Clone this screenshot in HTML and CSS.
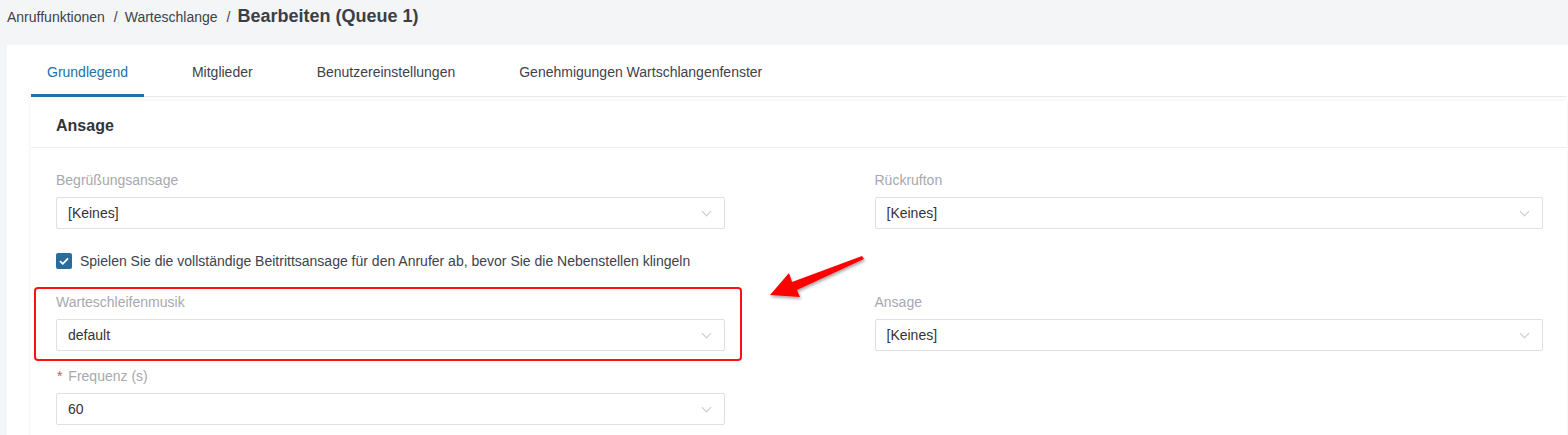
FILE: index.html
```html
<!DOCTYPE html>
<html lang="de">

<head>
  <meta charset="UTF-8" />
  <meta name="viewport" content="width=device-width, initial-scale=1.0" />
  <title>Bearbeiten (Queue 1)</title>
  <link rel="stylesheet" href="styles.css">
</head>

<body>
  <div class="page">
    <div class="breadcrumb">
      <span class="crumb">Anruffunktionen</span>
      <span class="sep">/</span>
      <span class="crumb">Warteschlange</span>
      <span class="sep">/</span>
      <span class="crumb current">Bearbeiten (Queue 1)</span>
    </div>

    <div class="main-card">
      <div class="tabs">
        <div class="tab active">Grundlegend</div>
        <div class="tab">Mitglieder</div>
        <div class="tab">Benutzereinstellungen</div>
        <div class="tab">Genehmigungen Wartschlangenfenster</div>
      </div>

      <div class="section-card">
        <div class="section-head">Ansage</div>
        <div class="section-body">
          <div class="form-grid">
            <div class="form-item">
              <label class="form-label">Begrüßungsansage</label>
              <div class="select"><span>[Keines]</span><i class="chevron"></i></div>
            </div>
            <div class="form-item">
              <label class="form-label">Rückrufton</label>
              <div class="select"><span>[Keines]</span><i class="chevron"></i></div>
            </div>

            <div class="check-row">
              <span class="checkbox">
                <svg width="10" height="8" viewBox="0 0 10 8"><path d="M1 4.2 L3.8 6.8 L9 1.4" fill="none" stroke="#fff" stroke-width="1.8"/></svg>
              </span>
              <span>Spielen Sie die vollständige Beitrittsansage für den Anrufer ab, bevor Sie die Nebenstellen klingeln</span>
            </div>

            <div class="form-item marked">
              <label class="form-label">Warteschleifenmusik</label>
              <div class="select"><span>default</span><i class="chevron"></i></div>
            </div>
            <div class="form-item">
              <label class="form-label">Ansage</label>
              <div class="select"><span>[Keines]</span><i class="chevron"></i></div>
            </div>

            <div class="form-item">
              <label class="form-label"><span class="req">*</span> Frequenz (s)</label>
              <div class="select"><span>60</span><i class="chevron"></i></div>
            </div>
          </div>
        </div>
      </div>
    </div>

    <svg class="arrow" width="120" height="60" viewBox="760 250 120 60">
      <defs>
        <filter id="shade" x="-20%" y="-40%" width="140%" height="180%">
          <feDropShadow dx="1" dy="2" stdDeviation="1.5" flood-color="#000" flood-opacity="0.35"/>
        </filter>
      </defs>
      <polygon points="770,295 789,273 792,282 862,256 864,259 797,290 800,297" fill="#ff0000" filter="url(#shade)"/>
    </svg>
  </div>
</body>

</html>
```

FILE: styles.css
```css
/* Page */
body {
  margin: 0;
  background: #f4f5f7;
  font-family: "Liberation Sans", Arial, sans-serif;
  color: #333;
  overflow: hidden;
}

.page {
  position: relative;
}

/* Breadcrumb */
.breadcrumb {
  height: 45px;
  padding: 7px 0 0 7px;
  display: flex;
  align-items: flex-start;
  box-sizing: border-box;
  font-size: 14px;
  line-height: 20px;
  color: #3d424b;
}

.sep {
  margin: 0 7px 0 9px;
}

.current {
  font-size: 18px;
  font-weight: bold;
  line-height: 18px;
  color: #3a3f47;
}

/* Outer card + tabs */
.main-card {
  margin-left: 7px;
  background: #fff;
  padding: 0 1px 0 24px;
  height: 400px;
}

.tabs {
  display: flex;
  gap: 32px;
  border-bottom: 1px solid #e9ebef;
  height: 52px;
  box-sizing: border-box;
}

.tab {
  padding: 17px 16px 0;
  font-size: 14px;
  line-height: 20px;
  color: #3d424b;
  box-sizing: border-box;
  height: 52px;
}

.tab.active {
  color: #2270a6;
  border-bottom: 3px solid #2270a6;
  margin-bottom: -1px;
}

/* Section card */
.section-card {
  margin-top: 4px;
  background: #fff;
  box-shadow: 0 0 6px rgba(0, 0, 0, 0.07);
  height: 400px;
}

.section-head {
  height: 47px;
  box-sizing: border-box;
  padding: 15px 25px 0;
  font-size: 16px;
  line-height: 20px;
  font-weight: bold;
  color: #30343b;
  border-bottom: 1px solid #ebeef2;
}

.section-body {
  padding: 22px 24px 0 25px;
}

.form-grid {
  display: grid;
  grid-template-columns: 1fr 1fr;
  column-gap: 150px;
}

.form-item {
  margin-bottom: 15px;
  position: relative;
}

.form-label {
  display: block;
  font-size: 14px;
  line-height: 20px;
  color: #a6a9ae;
  margin-bottom: 7px;
}

.req {
  color: #f04a3e;
  margin-left: 1px;
  margin-right: 2px;
}

.select {
  height: 32px;
  box-sizing: border-box;
  border: 1px solid #dcdfe4;
  border-radius: 2px;
  display: flex;
  align-items: center;
  justify-content: space-between;
  padding: 0 14px 0 11px;
  font-size: 14px;
  color: #333;
}

.chevron {
  width: 6px;
  height: 6px;
  border-right: 1px solid #c6c9ce;
  border-bottom: 1px solid #c6c9ce;
  transform: rotate(45deg);
  margin-top: -4px;
}

/* Checkbox row */
.check-row {
  grid-column: 1 / 3;
  height: 33px;
  margin-bottom: 15px;
  display: flex;
  align-items: center;
  gap: 8px;
  font-size: 14px;
  color: #3d424b;
}

.checkbox {
  width: 16px;
  height: 16px;
  border-radius: 2px;
  background: #2a6c9c;
  display: flex;
  align-items: center;
  justify-content: center;
}

/* Annotations */
.marked::after {
  content: "";
  position: absolute;
  left: -22px;
  right: -17px;
  top: -5px;
  bottom: -10px;
  border: 2px solid #f11;
  border-radius: 4px;
}

.arrow {
  position: absolute;
  left: 760px;
  top: 250px;
}
```
